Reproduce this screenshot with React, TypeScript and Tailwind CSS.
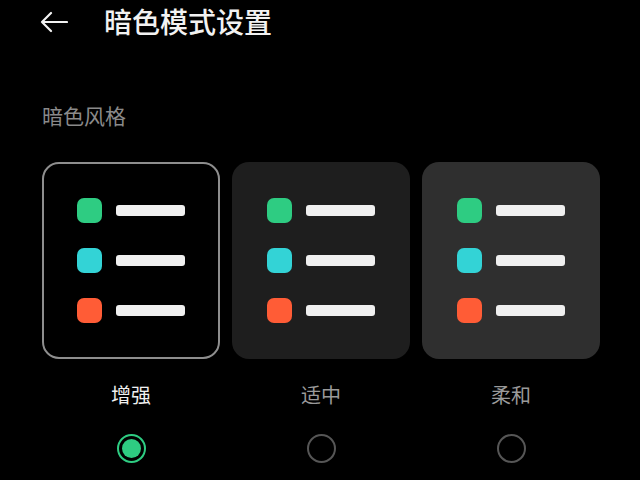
import React from "react";

const font = { fontFamily: '"Noto Sans CJK SC", "Noto Sans", sans-serif' };

function Card({ bg, border }: { bg: string; border?: boolean }) {
  const rows = ["bg-[#2ecc82]", "bg-[#33d3d6]", "bg-[#ff5c36]"];
  return (
    <div
      className={`w-[178px] h-[197px] rounded-[17px] ${bg} ${
        border ? "border-2 border-[#8e8e8e] pt-[34px] pl-[33px]" : "pt-[36px] pl-[35px]"
      } flex flex-col gap-[25px]`}
    >
      {rows.map((c, i) => (
        <div key={i} className="flex items-center gap-[14px] h-[25px]">
          <div className={`w-[25px] h-[25px] rounded-[7px] ${c}`} />
          <div className="w-[69px] h-[11px] rounded-[3px] bg-[#f0f0f0]" />
        </div>
      ))}
    </div>
  );
}

export default function App() {
  const options = [
    { label: "增强", bg: "bg-black", border: true, selected: true },
    { label: "适中", bg: "bg-[#1e1e1e]", border: false, selected: false },
    { label: "柔和", bg: "bg-[#2f2f2f]", border: false, selected: false },
  ];
  return (
    <div className="w-[640px] h-[480px] bg-black overflow-hidden text-white" style={font}>
      <div className="flex items-center h-[42px] pl-[40px]">
        <svg width="28" height="22" viewBox="0 0 28 22" className="mt-[1px]">
          <path
            d="M27 11H2M11 2L2 11L11 20"
            fill="none"
            stroke="#f2f2f2"
            strokeWidth="2.2"
            strokeLinecap="round"
            strokeLinejoin="round"
          />
        </svg>
        <div className="ml-[36px] text-[28px] leading-none text-[#f2f2f2] font-medium">暗色模式设置</div>
      </div>
      <div className="pl-[42px] mt-[63px] text-[21px] leading-none text-[#8a8a8a]">暗色风格</div>
      <div className="flex gap-[12px] pl-[42px] mt-[36px]">
        {options.map((o) => (
          <div key={o.label} className="flex flex-col items-center w-[178px]">
            <Card bg={o.bg} border={o.border} />
            <div
              className={`mt-[26px] text-[20px] leading-none ${
                o.selected ? "text-[#f0f0f0]" : "text-[#9a9a9a]"
              }`}
            >
              {o.label}
            </div>
            <div className="mt-[29px]">
              {o.selected ? (
                <div className="w-[29px] h-[29px] rounded-full border-[2.5px] border-[#2ecc82] flex items-center justify-center">
                  <div className="w-[19px] h-[19px] rounded-full bg-[#2ecc82]" />
                </div>
              ) : (
                <div className="w-[29px] h-[29px] rounded-full border-[2.5px] border-[#565656]" />
              )}
            </div>
          </div>
        ))}
      </div>
    </div>
  );
}
